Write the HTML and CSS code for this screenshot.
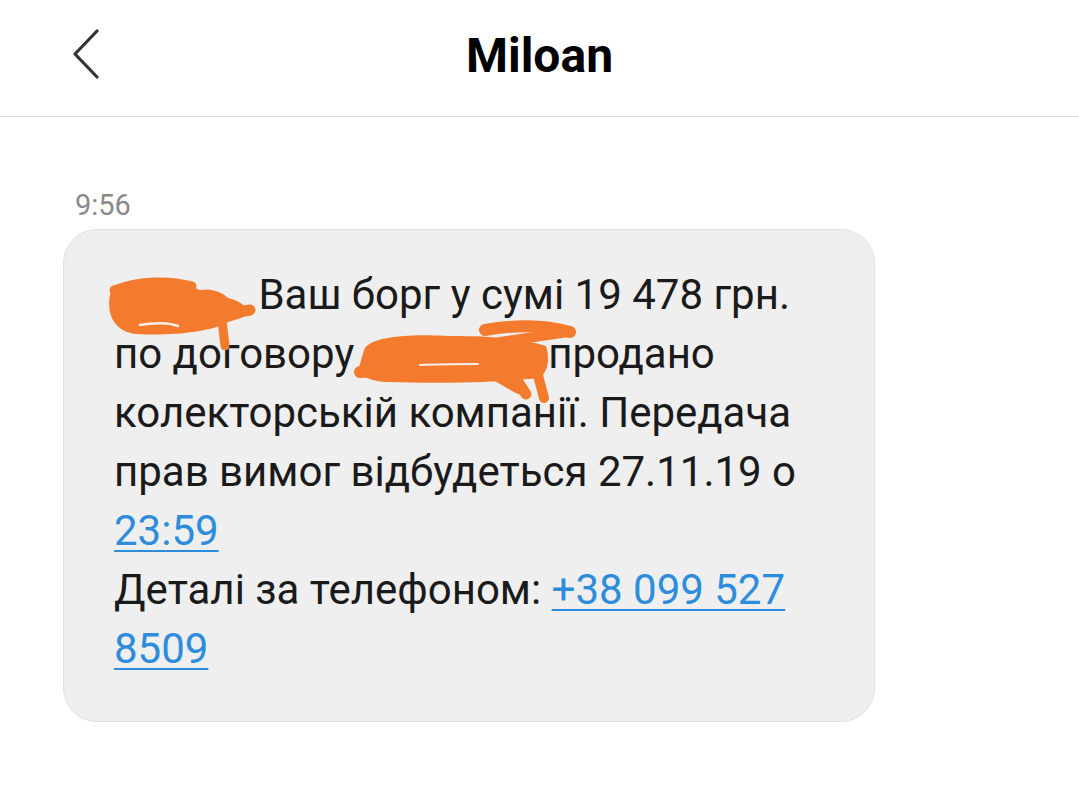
FILE: index.html
```html
<!DOCTYPE html>
<html lang="uk">
<head>
<meta charset="utf-8">
<title>Miloan</title>
<link rel="stylesheet" href="styles.css">
</head>
<body>
<header class="topbar">
  <button class="back" aria-label="Назад">
    <svg width="30" height="50" viewBox="0 0 30 50"><path d="M26 2 L4 25 L26 48" fill="none" stroke="#333" stroke-width="3.2" stroke-linecap="round" stroke-linejoin="round"/></svg>
  </button>
  <h1 class="title">Miloan</h1>
</header>
<main class="thread">
  <div class="time">9:56</div>
  <div class="bubble">
    <p class="msg"><span class="redact r1"><svg class="scribble" width="160" height="80" viewBox="0 0 160 80"><g fill="#f47a2e"><path d="M10 25 C12 14 30 12 60 13 C80 13 90 16 100 20 C112 18 122 22 128 28 C138 30 146 36 150 42 C146 48 132 50 124 54 C108 62 70 66 36 64 C16 62 6 46 10 25 Z"/></g><g fill="none" stroke="#f47a2e" stroke-linecap="round" stroke-linejoin="round"><path d="M108 48 L150 40" stroke-width="11"/><path d="M122 50 L125 76" stroke-width="9"/><path d="M14 20 C40 10 70 10 92 16" stroke-width="9"/></g><path d="M40 55 C55 52 70 53 78 56" fill="none" stroke="#f6f0ea" stroke-width="2.5" stroke-linecap="round"/></svg></span> Ваш борг у сумі 19&nbsp;478 грн. по договору <span class="redact r2"><svg class="scribble" width="235" height="90" viewBox="0 0 235 90"><g fill="#f47a2e"><path d="M14 32 C20 18 60 16 100 18 C140 18 170 20 196 28 C200 40 198 54 190 60 C150 64 90 66 40 64 C18 64 6 56 10 46 Z"/></g><g fill="none" stroke="#f47a2e" stroke-linecap="round" stroke-linejoin="round"><path d="M135 12 C170 6 200 8 220 14" stroke-width="12"/><path d="M150 24 L218 14" stroke-width="10"/><path d="M10 54 L80 50" stroke-width="12"/><path d="M160 52 L176 76" stroke-width="11"/><path d="M185 46 L194 80" stroke-width="10"/><path d="M145 58 C155 64 162 68 170 72" stroke-width="9"/></g><path d="M70 47 C90 46 110 46 128 46" fill="none" stroke="#f6f0ea" stroke-width="2" stroke-linecap="round"/></svg></span> продано колекторській компанії. Передача прав вимог відбудеться 27.11.19 о <a class="link" href="#">23:59</a><br>Деталі за телефоном: <a class="link" href="#">+38 099 527 8509</a></p>
  </div>
</main>
</body>
</html>
```
FILE: styles.css
```css
html, body {
  margin: 0;
  padding: 0;
  background: #ffffff;
}
body {
  font-family: Roboto, "Noto Sans", "Liberation Sans", sans-serif;
  color: #1a1a1a;
  width: 1079px;
  height: 796px;
  overflow: hidden;
}
.topbar {
  height: 116px;
  border-bottom: 1px solid #dedede;
  display: flex;
  align-items: center;
  justify-content: center;
  position: relative;
}
.back {
  position: absolute;
  left: 71px;
  top: 29px;
  padding: 0;
  border: 0;
  background: none;
  display: flex;
}
.title {
  margin: 0;
  font-size: 48px;
  font-weight: 700;
  color: #000;
  letter-spacing: 0;
  transform: translateY(-3px);
}
.thread {
  padding: 73px 0 0 63px;
}
.time {
  font-size: 29px;
  color: #8a8a8a;
  padding-left: 12px;
  line-height: 30px;
}
.bubble {
  margin-top: 9px;
  width: 812px;
  box-sizing: border-box;
  background: #efefef;
  border: 1px solid #e0e0e0;
  border-radius: 34px;
  padding: 35px 45px 43px 50px;
}
.msg {
  margin: 0;
  font-size: 42px;
  line-height: 59px;
}
.redact {
  position: relative;
  display: inline-block;
  vertical-align: baseline;
  height: 0;
}
.r1 { width: 134px; }
.r2 { width: 173px; }
.scribble {
  position: absolute;
  pointer-events: none;
}
.r1 .scribble { left: -14px; bottom: -41px; }
.r2 .scribble { left: -15px; bottom: -40px; }
.link {
  color: #2d8ddc;
  text-decoration: underline;
  text-decoration-thickness: 2px;
  text-underline-offset: 5px;
}
```
